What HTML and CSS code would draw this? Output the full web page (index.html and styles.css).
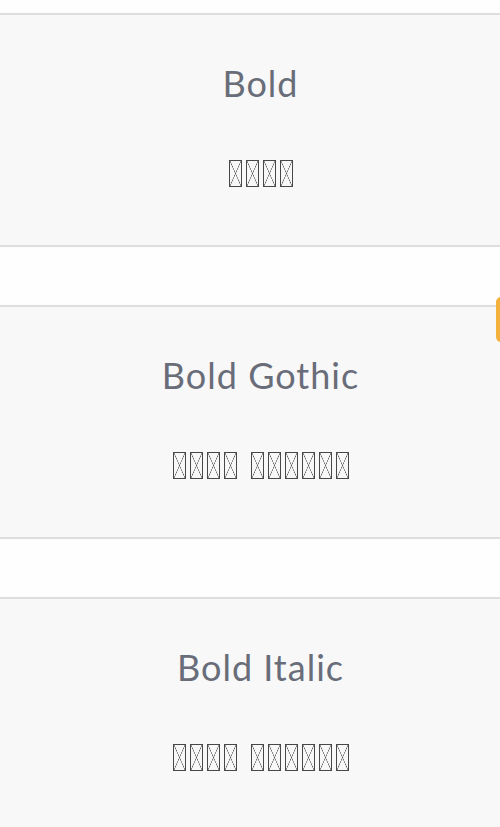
FILE: index.html
```html
<!DOCTYPE html>
<html lang="en">
<head>
    <meta charset="UTF-8">
    <meta name="viewport" content="width=device-width, initial-scale=1.0">
    <title>Fancy Fonts</title>
    <link rel="stylesheet" href="styles.css">
</head>
<body>
    <!-- Font style list -->
    <div class="font-list">
        <div class="font-card">
            <h2 class="font-name">Bold</h2>
            <p class="font-sample">
                <span class="word"><span class="glyph">𝐁</span><span class="glyph">𝐨</span><span class="glyph">𝐥</span><span class="glyph">𝐝</span></span>
            </p>
        </div>
        <div class="font-card">
            <h2 class="font-name">Bold Gothic</h2>
            <p class="font-sample">
                <span class="word"><span class="glyph">𝕭</span><span class="glyph">𝖔</span><span class="glyph">𝖑</span><span class="glyph">𝖉</span></span>
                <span class="word"><span class="glyph">𝕲</span><span class="glyph">𝖔</span><span class="glyph">𝖙</span><span class="glyph">𝖍</span><span class="glyph">𝖎</span><span class="glyph">𝖈</span></span>
            </p>
        </div>
        <div class="font-card">
            <h2 class="font-name">Bold Italic</h2>
            <p class="font-sample">
                <span class="word"><span class="glyph">𝑩</span><span class="glyph">𝒐</span><span class="glyph">𝒍</span><span class="glyph">𝒅</span></span>
                <span class="word"><span class="glyph">𝑰</span><span class="glyph">𝒕</span><span class="glyph">𝒂</span><span class="glyph">𝒍</span><span class="glyph">𝒊</span><span class="glyph">𝒄</span></span>
            </p>
        </div>
    </div>

    <!-- Floating tab on the right edge -->
    <div class="side-tab"></div>
</body>
</html>
```

FILE: styles.css
```css
/* Body and general settings */
body {
    margin: 0;
    padding: 0;
    background-color: #fefefe;
    font-family: Lato, "Open Sans", sans-serif;
    overflow: hidden;
    position: relative;
    height: 827px;
}

.font-list {
    display: flex;
    flex-direction: column;
    gap: 58px;
    padding-top: 13px;
}

/* One card per font style */
.font-card {
    background-color: #f8f8f8;
    border-top: 2px solid #dedede;
    border-bottom: 2px solid #dedede;
    height: 230px;
    padding-left: 21px;
    text-align: center;
}

.font-name {
    margin: 46px 0 0;
    font-size: 36px;
    font-weight: 400;
    line-height: 44px;
    letter-spacing: 1px;
    color: #696d79;
}

/* Sample line: the fancy letters show as missing-glyph boxes */
.font-sample {
    margin: 55px 0 0;
    display: flex;
    justify-content: center;
    gap: 14px;
}

.word {
    display: flex;
    gap: 4px;
}

.glyph {
    display: flex;
    align-items: center;
    justify-content: center;
    box-sizing: border-box;
    width: 13px;
    height: 27px;
    border: 1.5px solid #484848;
    color: transparent;
    font-family: "DejaVu Sans", sans-serif;
    font-size: 7px;
    line-height: 10px;
    background:
        linear-gradient(to top right, transparent calc(50% - 0.6px), #5a5a5a 50%, transparent calc(50% + 0.6px)),
        linear-gradient(to bottom right, transparent calc(50% - 0.6px), #5a5a5a 50%, transparent calc(50% + 0.6px));
}

/* Orange tab */
.side-tab {
    position: absolute;
    top: 297px;
    right: -6px;
    width: 10px;
    height: 45px;
    border-radius: 5px;
    background-color: #f2b23c;
}
```
